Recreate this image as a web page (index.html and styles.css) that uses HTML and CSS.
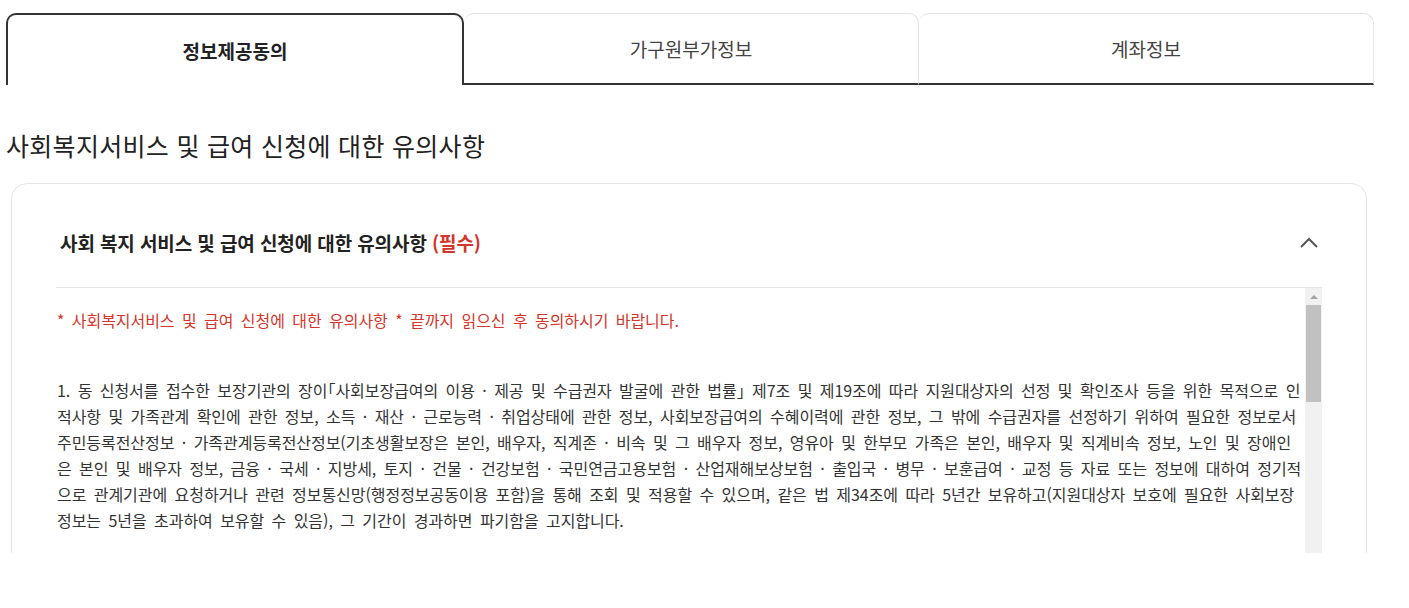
FILE: index.html
```html
<!DOCTYPE html>
<html lang="ko">
<head>
    <meta charset="UTF-8">
    <meta name="viewport" content="width=device-width, initial-scale=1.0">
    <title>정보제공동의</title>
    <link rel="stylesheet" href="styles.css">
</head>
<body>
    <div class="page">
        <!-- Tabs -->
        <ul class="tabs">
            <li class="tab active">정보제공동의</li>
            <li class="tab">가구원부가정보</li>
            <li class="tab">계좌정보</li>
        </ul>

        <h2 class="section-title">사회복지서비스 및 급여 신청에 대한 유의사항</h2>

        <div class="card">
            <div class="card-head">
                <h3>사회 복지 서비스 및 급여 신청에 대한 유의사항 <span class="required">(필수)</span></h3>
                <svg class="chevron" width="20" height="12" viewBox="0 0 20 12">
                    <polyline points="2,10 10,2 18,10" fill="none" stroke="#555" stroke-width="2"/>
                </svg>
            </div>

            <div class="terms">
                <div class="terms-body">
                    <p class="notice">* 사회복지서비스 및 급여 신청에 대한 유의사항 * 끝까지 읽으신 후 동의하시기 바랍니다.</p>
                    <p>1. 동 신청서를 접수한 보장기관의 장이「사회보장급여의 이용 · 제공 및 수급권자 발굴에 관한 법률」 제7조 및 제19조에 따라 지원대상자의 선정 및 확인조사 등을 위한 목적으로 인적사항 및 가족관계 확인에 관한 정보, 소득 · 재산 · 근로능력 · 취업상태에 관한 정보, 사회보장급여의 수혜이력에 관한 정보, 그 밖에 수급권자를 선정하기 위하여 필요한 정보로서 주민등록전산정보 · 가족관계등록전산정보(기초생활보장은 본인, 배우자, 직계존 · 비속 및 그 배우자 정보, 영유아 및 한부모 가족은 본인, 배우자 및 직계비속 정보, 노인 및 장애인은 본인 및 배우자 정보, 금융 · 국세 · 지방세, 토지 · 건물 · 건강보험 · 국민연금고용보험 · 산업재해보상보험 · 출입국 · 병무 · 보훈급여 · 교정 등 자료 또는 정보에 대하여 정기적으로 관계기관에 요청하거나 관련 정보통신망(행정정보공동이용 포함)을 통해 조회 및 적용할 수 있으며, 같은 법 제34조에 따라 5년간 보유하고(지원대상자 보호에 필요한 사회보장정보는 5년을 초과하여 보유할 수 있음), 그 기간이 경과하면 파기함을 고지합니다.</p>
                </div>
                <div class="scrollbar">
                    <span class="scroll-arrow"></span>
                    <span class="scroll-thumb"></span>
                </div>
            </div>
        </div>
    </div>
</body>
</html>
```

FILE: styles.css
```css
* {
    box-sizing: border-box;
}
body {
    margin: 0;
    background-color: #fff;
    color: #222;
    font-family: "Noto Sans CJK KR", "Noto Sans", sans-serif;
}
.page {
    height: 553px;
    overflow: hidden;
    padding: 13px 0 0 6px;
}

/* tabs */
.tabs {
    display: flex;
    width: 1368px;
    margin: 0;
    padding: 0;
    list-style: none;
}
.tab {
    flex: 1;
    height: 72px;
    display: flex;
    align-items: center;
    justify-content: center;
    font-size: 19px;
    color: #444;
    border: 1px solid #e3e3e3;
    border-bottom: 2px solid #333;
    border-radius: 10px 10px 0 0;
    cursor: pointer;
}
.tab + .tab {
    border-left: none;
}
.tab.active {
    font-weight: bold;
    color: #222;
    border: 2px solid #333;
    border-bottom: none;
}

.section-title {
    margin: 43px 0 21px;
    font-size: 25px;
    font-weight: normal;
    line-height: 34px;
    letter-spacing: 0.3px;
    color: #222;
}

/* card */
.card {
    margin-left: 5px;
    width: 1356px;
    padding: 0 44px;
    border: 1px solid #e6e6e6;
    border-radius: 16px;
}
.card-head {
    display: flex;
    align-items: center;
    justify-content: space-between;
    padding: 46px 3px 31px 4px;
}
.card-head h3 {
    margin: 0;
    font-size: 19px;
    line-height: 26px;
    letter-spacing: -0.1px;
    color: #222;
}
.required {
    color: #d6352b;
}

.terms {
    display: flex;
    height: 300px;
    border-top: 1px solid #e6e6e6;
}
.terms-body {
    flex: 1;
    overflow: hidden;
    padding: 19px 1px 0 1px;
    font-size: 16px;
    line-height: 26px;
    letter-spacing: -0.05px;
    word-spacing: 3px;
    font-feature-settings: "halt" 1;
    color: #333;
}
.terms-body p {
    margin: 0 0 26px;
}
.terms-body .notice {
    color: #d6352b;
    margin-bottom: 44px;
}

/* scrollbar */
.scrollbar {
    width: 17px;
    display: flex;
    flex-direction: column;
    align-items: center;
    background-color: #f1f1f1;
}
.scroll-arrow {
    margin: 7px 0 6px;
    width: 0;
    height: 0;
    border-left: 4px solid transparent;
    border-right: 4px solid transparent;
    border-bottom: 4px solid #a3a3a3;
}
.scroll-thumb {
    width: 15px;
    height: 97px;
    background-color: #c1c1c1;
}
```
